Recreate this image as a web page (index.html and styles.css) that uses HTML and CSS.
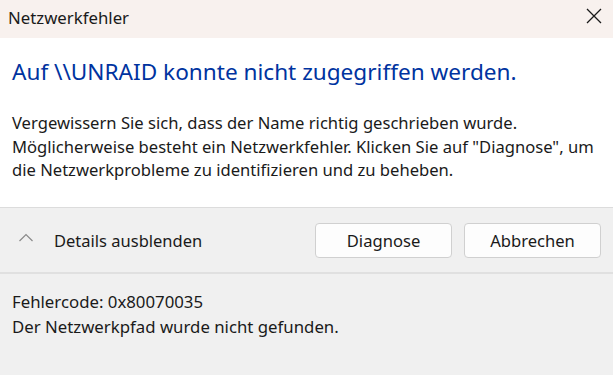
FILE: index.html
```html
<!DOCTYPE html>
<html lang="de">
<head>
    <meta charset="UTF-8">
    <meta name="viewport" content="width=device-width, initial-scale=1.0">
    <title>Netzwerkfehler</title>
    <link rel="stylesheet" href="styles.css">
</head>
<body>
    <div class="dialog">
        <div class="titlebar">
            <span class="title">Netzwerkfehler</span>
            <svg class="close" width="16" height="16" viewBox="0 0 16 16">
                <path d="M1 1 L15 15 M15 1 L1 15" stroke="#1a1a1a" stroke-width="1.3" fill="none"/>
            </svg>
        </div>

        <div class="content">
            <h1 class="instruction">Auf \\UNRAID konnte nicht zugegriffen werden.</h1>
            <p class="message">Vergewissern Sie sich, dass der Name richtig geschrieben wurde.<br>Möglicherweise besteht ein Netzwerkfehler. Klicken Sie auf "Diagnose", um die Netzwerkprobleme zu identifizieren und zu beheben.</p>
        </div>

        <div class="footer">
            <div class="toggle">
                <svg class="chevron" width="16" height="10" viewBox="0 0 16 10">
                    <path d="M1.5 8 L8 1.5 L14.5 8" stroke="#8a8a8a" stroke-width="1.2" fill="none"/>
                </svg>
                <span>Details ausblenden</span>
            </div>
            <div class="buttons">
                <button class="btn">Diagnose</button>
                <button class="btn">Abbrechen</button>
            </div>
        </div>

        <div class="details">
            <p>Fehlercode: 0x80070035</p>
            <p>Der Netzwerkpfad wurde nicht gefunden.</p>
        </div>
    </div>
</body>
</html>
```

FILE: styles.css
```css
body {
    margin: 0;
    padding: 0;
    font-family: "Noto Sans", "Open Sans", sans-serif;
    color: #1a1a1a;
    background-color: #f0f0f0;
}

.dialog {
    width: 613px;
    height: 375px;
    display: flex;
    flex-direction: column;
    overflow: hidden;
}

.titlebar {
    height: 38px;
    background-color: #f8f1ee;
    display: flex;
    align-items: center;
    justify-content: space-between;
    padding: 0 11px 0 8px;
}

.title {
    font-size: 16.8px;
    color: #1a1a1a;
    margin-top: -4px;
}

.close {
    margin-top: -6px;
}

.content {
    background-color: #fff;
    height: 169px;
    padding: 0 4px 0 12px;
    box-sizing: border-box;
}

.instruction {
    margin: 0;
    padding-top: 19px;
    font-size: 22.6px;
    font-weight: normal;
    color: #0033a0;
    line-height: 30px;
}

.message {
    margin: 24px 0 0;
    font-size: 16.6px;
    line-height: 23.5px;
}

.footer {
    height: 64px;
    border-top: 1px solid #dcdcdc;
    border-bottom: 2px solid #e0e0e0;
    background-color: #f0f0f0;
    display: flex;
    align-items: center;
    justify-content: space-between;
    padding: 0 12px 0 18px;
}

.toggle {
    display: flex;
    align-items: center;
    gap: 20px;
    font-size: 16.5px;
}

.chevron {
    margin-top: -4px;
}

.buttons {
    display: flex;
    gap: 12px;
}

.btn {
    width: 137px;
    height: 35px;
    background-color: #fdfdfd;
    border: 1px solid #d0d0d0;
    border-radius: 4px;
    font-family: inherit;
    font-size: 16.6px;
    color: #1a1a1a;
    padding: 0;
}

.details {
    flex: 1;
    background-color: #f0f0f0;
    padding: 15px 12px 0;
    font-size: 16.8px;
    line-height: 25px;
}

.details p {
    margin: 0;
}
```
